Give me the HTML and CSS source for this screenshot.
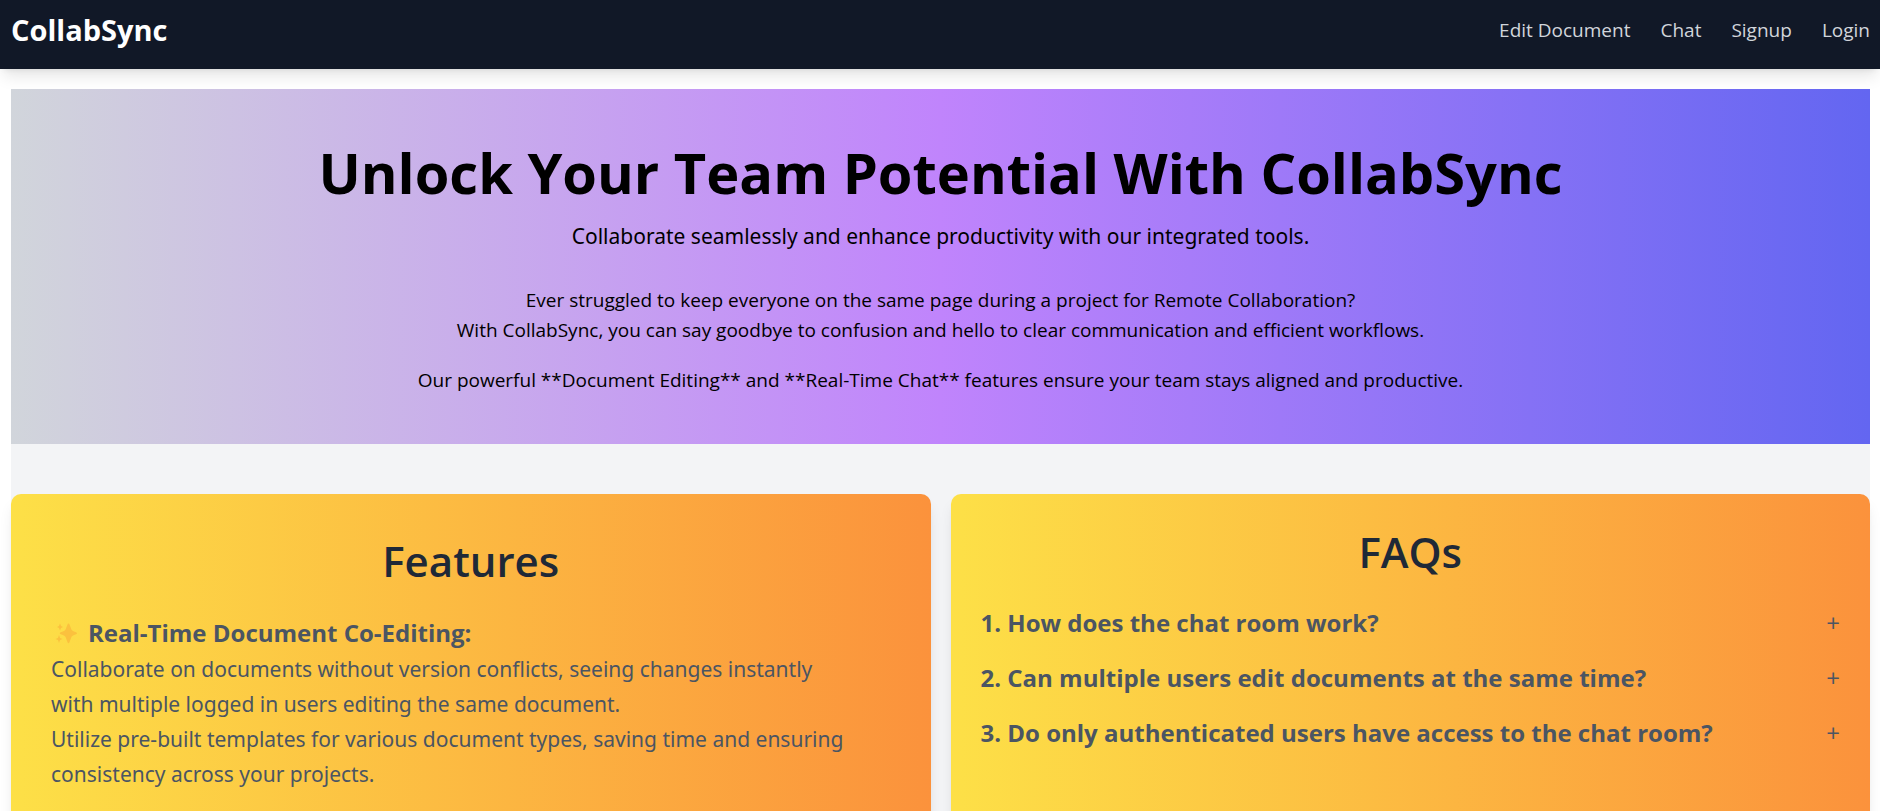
FILE: index.html
```html
<!DOCTYPE html>
<html lang="en">
<head>
<meta charset="utf-8">
<meta name="viewport" content="width=device-width, initial-scale=1">
<title>CollabSync</title>
<link rel="stylesheet" href="styles.css">
</head>
<body>
<header class="site-header">
  <a class="logo" href="#">CollabSync</a>
  <nav class="nav">
    <a href="#edit">Edit Document</a>
    <a href="#chat">Chat</a>
    <a href="#signup">Signup</a>
    <a href="#login">Login</a>
  </nav>
</header>
<main class="page">
  <section class="hero">
    <h1>Unlock Your Team Potential With CollabSync</h1>
    <p class="lead">Collaborate seamlessly and enhance productivity with our integrated tools.</p>
    <p class="pitch">Ever struggled to keep everyone on the same page during a project for Remote Collaboration?<br>With CollabSync, you can say goodbye to confusion and hello to clear communication and efficient workflows.</p>
    <p class="pitch">Our powerful **Document Editing** and **Real-Time Chat** features ensure your team stays aligned and productive.</p>
  </section>
  <div class="cards">
    <section class="card features">
      <h2>Features</h2>
      <h3>
        <svg class="sparkles" viewBox="0 0 22 22" aria-hidden="true">
          <path d="M13.500 1.500 Q14.200 1.500 14.500 2.600 L16.300 7.300 Q16.800 8.500 18 9 L21.500 10.500 Q22.500 11.300 21.500 12 L18 13.500 Q16.800 14 16.300 15.200 L14.500 20.300 Q13.500 22 12.500 20.300 L10.700 15.200 Q10.200 14 9 13.500 L5.200 12 Q4.200 11.300 5.200 10.500 L9 9 Q10.200 8.500 10.700 7.300 L12.500 2.600 Q12.800 1.500 13.500 1.500Z"/>
          <path d="M5 1.500 L6 4 L8 5 L6 6 L5 8.500 L4 6 L2 5 L4 4Z"/>
          <path d="M4 13 L5 16 L7.500 17 L5 18 L4 21 L3 18 L.5 17 L3 16Z"/>
        </svg>
        Real-Time Document Co-Editing:
      </h3>
      <p>Collaborate on documents without version conflicts, seeing changes instantly<br>with multiple logged in users editing the same document.</p>
      <p>Utilize pre-built templates for various document types, saving time and ensuring<br>consistency across your projects.</p>
    </section>
    <section class="card faqs">
      <h2>FAQs</h2>
      <div class="questions">
        <button class="question" type="button" aria-expanded="false"><span>1. How does the chat room work?</span><span class="toggle">+</span></button>
        <button class="question" type="button" aria-expanded="false"><span>2. Can multiple users edit documents at the same time?</span><span class="toggle">+</span></button>
        <button class="question" type="button" aria-expanded="false"><span>3. Do only authenticated users have access to the chat room?</span><span class="toggle">+</span></button>
      </div>
    </section>
  </div>
</main>
</body>
</html>
```
FILE: styles.css
```css
*, *::before, *::after { box-sizing: border-box; }

body {
  margin: 0;
  background: #fff;
  color: #000;
  font-family: "Open Sans", "Noto Sans", sans-serif;
  font-size: 19px;
  line-height: 30px;
}

h1, h2, h3, p { margin: 0; }

a { color: inherit; text-decoration: none; }

.site-header {
  display: flex;
  justify-content: space-between;
  align-items: flex-start;
  padding: 8px 10px 16px 11px;
  background: #111827;
  box-shadow: 0 10px 15px -3px rgb(0 0 0 / 0.1), 0 4px 6px -4px rgb(0 0 0 / 0.1);
}

.logo {
  color: #fff;
  font-size: 29px;
  font-weight: 700;
  line-height: 44px;
}

.nav {
  display: flex;
  gap: 30px;
  color: #d1d5db;
  line-height: 45px;
}

.page {
  margin: 20px 10px 0 11px;
  background: #f3f4f6;
}

.hero {
  padding: 53px 20px 49px;
  background: linear-gradient(to right, #d1d5db, #c084fc, #6366f1);
  text-align: center;
}

.hero h1 {
  margin-bottom: 17px;
  font-size: 56px;
  font-weight: 700;
  line-height: 60px;
}

.lead {
  margin-bottom: 31px;
  font-family: "Noto Sans", "Open Sans", sans-serif;
  font-size: 21px;
  line-height: 35px;
}

.pitch + .pitch { margin-top: 20px; }

.cards {
  display: grid;
  grid-template-columns: 1fr 1fr;
  gap: 20px;
  padding-top: 50px;
}

.card {
  border-radius: 10px;
  background: linear-gradient(to right, #fde047, #fb923c);
  box-shadow: 0 10px 15px -3px rgb(0 0 0 / 0.1), 0 4px 6px -4px rgb(0 0 0 / 0.1);
  color: #4b5563;
}

.card h2 {
  margin-bottom: 28px;
  color: #1f2937;
  font-size: 42px;
  font-weight: 600;
  line-height: 50px;
  text-align: center;
}

.features {
  padding: 42px 40px 40px;
  font-family: "Noto Sans", "Open Sans", sans-serif;
  font-size: 21px;
  line-height: 35px;
}

.features h2,
.features h3 { font-family: "Open Sans", "Noto Sans", sans-serif; }

.features h3 {
  display: flex;
  align-items: center;
  gap: 11px;
  padding-left: 4px;
  font-size: 24px;
  line-height: 38px;
}

.sparkles {
  width: 22px;
  height: 22px;
  fill: #fbc13e;
}

.faqs { padding: 33px 30px 30px; }

.questions {
  display: grid;
  gap: 20px;
}

.question {
  display: flex;
  justify-content: space-between;
  align-items: center;
  width: 100%;
  padding: 0;
  border: 0;
  background: none;
  color: inherit;
  font: 700 24px/35px "Open Sans", "Noto Sans", sans-serif;
  text-align: left;
  cursor: pointer;
}

.toggle { font-weight: 400; }
```
